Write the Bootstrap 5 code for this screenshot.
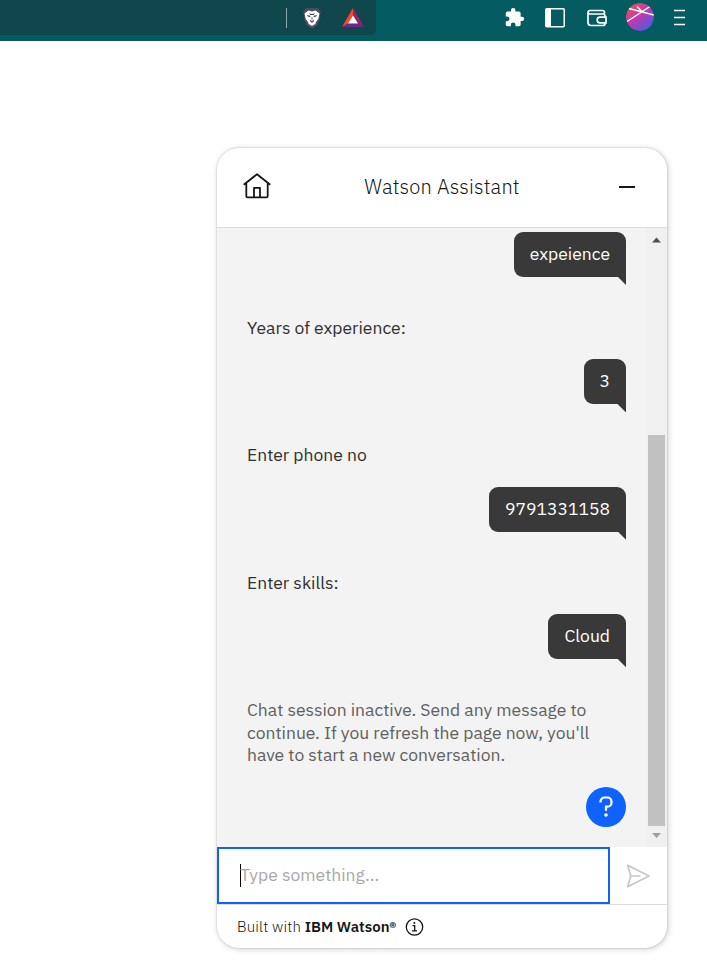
<!DOCTYPE html>
<html lang="en">
<head>
<meta charset="utf-8">
<meta name="viewport" content="width=device-width, initial-scale=1">
<title>Watson Assistant</title>
<link href="https://cdn.jsdelivr.net/npm/bootstrap@5.3.0/dist/css/bootstrap.min.css" rel="stylesheet">
<style>
body{font-family:"IBM Plex Sans",Roboto,"Liberation Sans",sans-serif;color:#161616;height:977px;overflow:hidden}
.browser-bar{height:41px;background:#045b60}
.address-end{width:376px;height:35px;background:#0f474c;border-radius:0 0 5px 0;padding-right:6px}
.divider-line{width:1px;height:20px;background:#8fa9ab;margin:0 15px 0 0}
.browser-tools{padding:0 20px 0 0;height:35px}
.tool-puzzle{margin-right:20px}
.tool-panel{margin-right:22px}
.tool-wallet{margin-right:19px}
.chat-panel{width:450px;height:800px;margin:107px 0 0 217px;border-radius:22px;box-shadow:0 0 1px 1px rgba(0,0,0,.07),1px 1px 6px rgba(0,0,0,.2)}
.chat-head{height:80px;border-bottom:1px solid #dcdcdc;padding:0 32px 2px 26px}
.chat-title{font-size:20px;font-weight:300;line-height:24px;letter-spacing:.2px;margin-right:6px}
.chat-area{height:619px;background:#f3f3f3}
.thread{padding:4px 20px 20px 30px}
.bubble{height:45px;padding:0 16px;border-radius:9px 9px 0 9px;background:#393939;color:#fff;font-size:17.5px;line-height:44px;position:relative}
.bubble::after{content:"";position:absolute;right:0;top:44px;width:9px;height:9px;background:#393939;clip-path:polygon(0 0,100% 0,100% 100%)}
.reply{font-size:17.5px;line-height:22.5px;margin:40px 0 19.9px;white-space:nowrap;color:#303030}
.reply.muted-note{color:#606060;margin-bottom:20.3px}
.help-btn{width:40px;height:40px;background:#0f62fe}
.scroll-track{width:21px;background:#f0f0f0;padding:9px 2px 9px}
.scroll-thumb{width:17px;height:391px;background:#c1c1c1;margin-top:192px}
.compose{height:58px;border-bottom:1px solid #dcdcdc}
.compose-box{width:393px;height:57px;border:2px solid #0f62fe;padding:0 0 1px 21px;color:#a8a8a8;font-size:17.5px}
.ph{margin-left:-1px}
.caret{width:1px;height:23px;background:#000}
.chat-foot{height:43px;padding:1px 0 0 20px;font-size:15px;font-weight:300;letter-spacing:.15px}
.chat-foot b{font-weight:600;letter-spacing:.02px}
</style>
<script src="https://cdn.jsdelivr.net/npm/bootstrap@5.3.0/dist/js/bootstrap.bundle.min.js"></script>
</head>
<body class="bg-white">
<header class="browser-bar d-flex justify-content-between align-items-start">
  <div class="address-end d-flex align-items-center justify-content-end">
    <span class="divider-line"></span>
    <svg width="20" height="22" viewBox="0 0 20 22"><path d="M4 1h12l3 4-1 3 .4 2-2.700 8L10 22l-5.700-4L1.600 10 2 8 1 5z" fill="#4b4c5c"/><path d="M6.500 3.500l3.500 1 3.500-1 4 3-1.200 5.500-2.300 3-.7 2L10 19l-3.300-2-.7-2L3.700 12l-1.200-5.500z" fill="#fff"/><path d="M5 8l3.500.8-.3 1.400-2.400-.6zm10 0l-3.500.8.3 1.400 2.400-.6zM7.800 12.700l2.200 1.200 2.200-1.200-.6 2-1.600 1-1.600-1zM9.600 10h.8v3h-.8zM7 5l1 1.800h4L13 5l-1 3H8z" fill="#4b4c5c"/></svg>
    <svg class="ms-3" width="32" height="22" viewBox="0 0 32 22"><path d="M15 1L4 20l6-3.500 5-8z" fill="#ff4724"/><path d="M15 1l11 19-6-3.500-5-8z" fill="#9e1f63"/><path d="M4 20h22l-6-3.500H10z" fill="#662d91"/><path d="M15 8.500l5 8H10z" fill="#fff"/></svg>
  </div>
  <div class="browser-tools d-flex align-items-center">
    <svg class="tool-puzzle" width="21" height="21" viewBox="0 0 24 24" fill="#fff"><path d="M20.500 11H19V7a2 2 0 0 0-2-2h-4V3.500a2.500 2.500 0 0 0-5 0V5H4a2 2 0 0 0-2 2v3.800h1.500a2.700 2.700 0 0 1 0 5.400H2V20a2 2 0 0 0 2 2h3.800v-1.500a2.700 2.700 0 0 1 5.400 0V22H17a2 2 0 0 0 2-2v-4h1.500a2.500 2.500 0 0 0 0-5z"/></svg>
    <svg class="tool-panel" width="20" height="20" viewBox="0 0 20 20"><rect x=".75" y=".75" width="18.500" height="18" rx="1" fill="none" stroke="#fff" stroke-width="1.500"/><path d="M1 1h5v18H1z" fill="#fff"/></svg>
    <svg class="tool-wallet" width="20" height="18" viewBox="0 0 20 18" fill="none" stroke="#fff" stroke-width="1.700"><path d="M17.500 4.500V3.500a2 2 0 0 0-2-2H3a2 2 0 0 0-2 2v10a3 3 0 0 0 3 3h12a2 2 0 0 0 2-2M1 3.500a2 2 0 0 0 2 1.500h13a2 2 0 0 1 2 2v1M19 8.200h-6a2.800 2.800 0 0 0 0 5.600h6z"/></svg>
    <svg width="28" height="30" viewBox="0 0 28 30"><defs><linearGradient id="orb" x1=".1" y1=".1" x2=".8" y2=".95"><stop stop-color="#f04b59"/><stop offset=".5" stop-color="#b83cb3"/><stop offset="1" stop-color="#4d5be0"/></linearGradient><clipPath id="disc"><circle cx="14" cy="14" r="14"/></clipPath></defs><g clip-path="url(#disc)"><circle cx="14" cy="14" r="14" fill="url(#orb)"/><path d="M1 18.500L24 3.500M3 5.500l25 6.500M11 3.500l5 5" stroke="#fff" stroke-width="1.400"/></g></svg>
    <svg class="ms-3" width="17" height="18" viewBox="0 0 17 18"><path d="M4 1.500h11M4 8.500h11M4 15.500h11" stroke="#fff" stroke-width="1.500"/></svg>
  </div>
</header>

<main class="chat-panel bg-white overflow-hidden d-flex flex-column">
  <div class="chat-head d-flex align-items-center justify-content-between">
    <svg width="28" height="28" viewBox="0 0 28 28" fill="none" stroke="#161616" stroke-width="1.800" stroke-linejoin="round"><path d="M.7 11.700L14 1.200l13.300 10.500M3.300 10v13a1.400 1.400 0 0 0 1.400 1.400h18.600a1.400 1.400 0 0 0 1.400-1.400V10M11 24.400v-9.600h6v9.600"/></svg>
    <div class="chat-title">Watson Assistant</div>
    <svg width="16" height="2"><path d="M0 1h16" stroke="#161616" stroke-width="2"/></svg>
  </div>
  <div class="chat-area d-flex">
    <div class="thread flex-grow-1 d-flex flex-column">
      <div class="bubble align-self-end">expeience</div>
      <div class="reply">Years of experience:</div>
      <div class="bubble align-self-end">3</div>
      <div class="reply">Enter phone no</div>
      <div class="bubble align-self-end">9791331158</div>
      <div class="reply">Enter skills:</div>
      <div class="bubble align-self-end">Cloud</div>
      <div class="reply muted-note">Chat session inactive. Send any message to<br>continue. If you refresh the page now, you'll<br>have to start a new conversation.</div>
      <button class="help-btn btn rounded-circle border-0 p-0 align-self-end d-flex align-items-center justify-content-center flex-shrink-0" aria-label="Help"><svg width="14" height="22" viewBox="0 0 14 22"><path d="M1.500 6.500V5.500A4 4 0 0 1 5.500 1.500h3a4 4 0 0 1 4 4v1.200a4 4 0 0 1-4 4H7v4" fill="none" stroke="#fff" stroke-width="2.200"/><circle cx="7" cy="19" r="1.800" fill="#fff"/></svg></button>
    </div>
    <div class="scroll-track d-flex flex-column align-items-center flex-shrink-0">
      <svg class="flex-shrink-0" width="9" height="6"><path d="M0 5.500L4.500.5 9 5.500z" fill="#505050"/></svg>
      <div class="scroll-thumb flex-shrink-0"></div>
      <svg class="mt-auto flex-shrink-0" width="9" height="5"><path d="M0 0h9L4.500 5z" fill="#a0a0a0"/></svg>
    </div>
  </div>
  <div class="compose d-flex flex-shrink-0">
    <div class="compose-box d-flex align-items-center"><span class="caret"></span><span class="ph">Type something...</span></div>
    <div class="flex-grow-1 d-flex align-items-center justify-content-center"><svg width="24" height="24" viewBox="0.5 0 24 24" fill="none" stroke="#c6c6c6" stroke-width="1.700" stroke-linejoin="round"><path d="M1.200 1.200L22.500 12 1.200 22.800 4.200 12zM4.200 12H14"/></svg></div>
  </div>
  <div class="chat-foot d-flex align-items-center">
    <div>Built with <b>IBM Watson®</b></div>
    <svg class="ms-2" width="20" height="18" viewBox="-1.500 0 20 18" fill="none" stroke="#161616" stroke-width="1.300"><circle cx="9" cy="9" r="8.200"/><path d="M7 7.700h2.200v5M6.500 12.800h5"/><circle cx="8.900" cy="4.900" r="1" fill="#161616" stroke="none"/></svg>
  </div>
</main>
</body>
</html>
